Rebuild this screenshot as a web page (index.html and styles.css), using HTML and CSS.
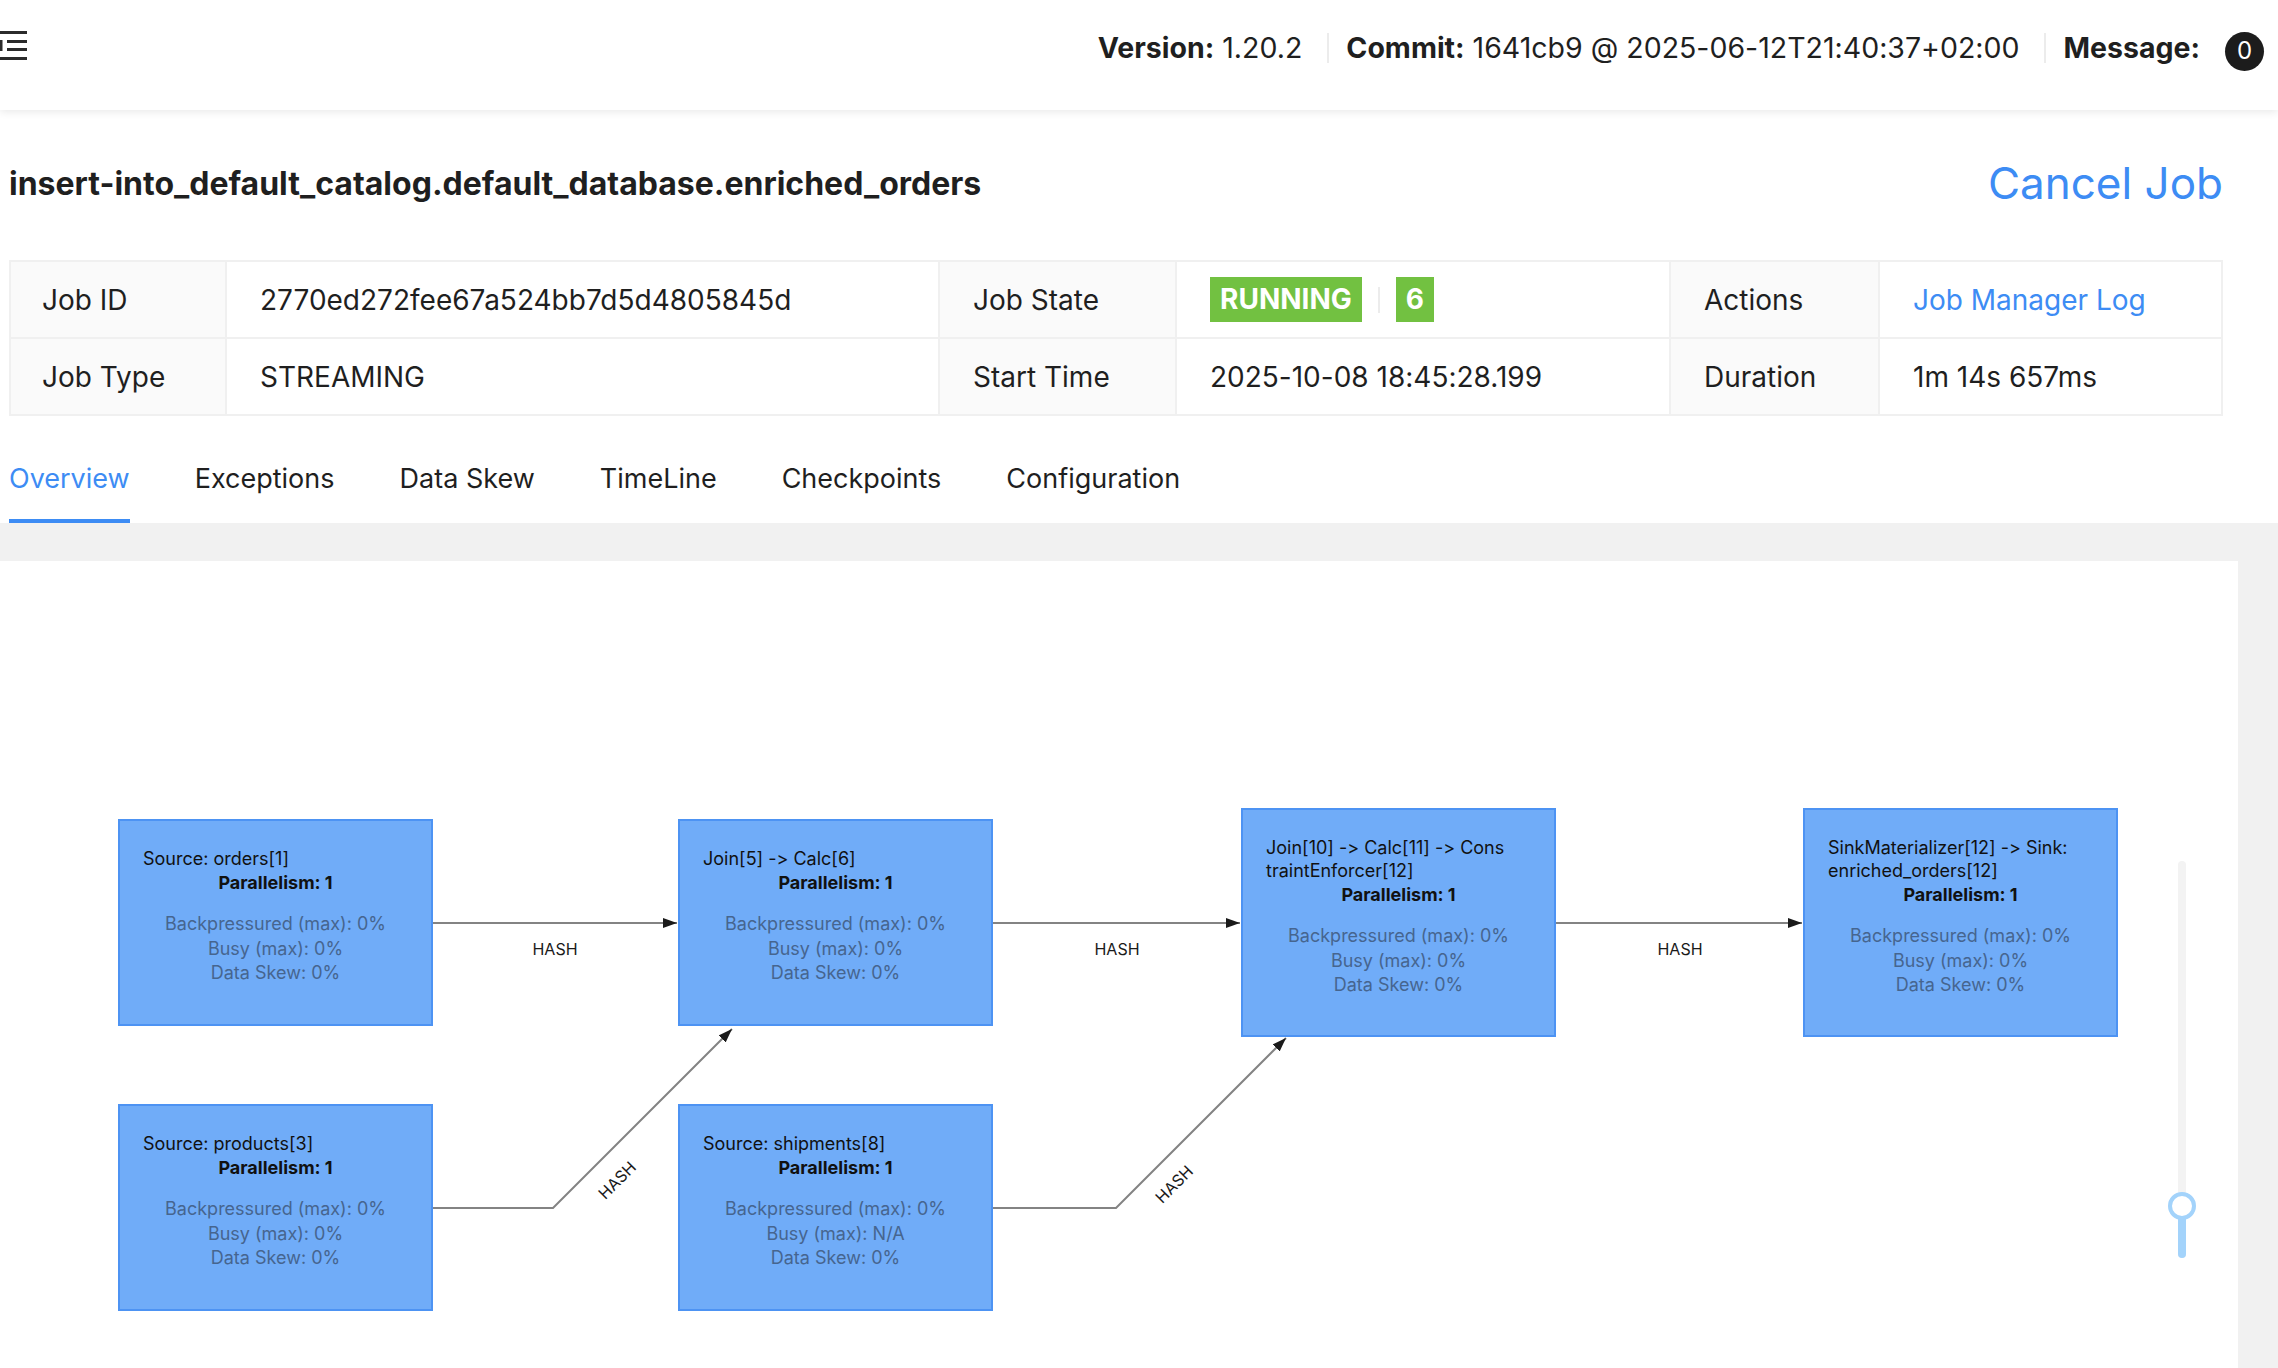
FILE: index.html
```html
<!DOCTYPE html>
<html lang="en">
<head>
<meta charset="utf-8">
<title>Flink Job</title>
<link rel="stylesheet" href="styles.css">
</head>
<body>
<header class="topbar">
  <svg class="menu-icon" width="27" height="29" viewBox="0 0 27 29" aria-hidden="true">
    <rect x="0" y="0" width="27" height="3" fill="#2b2b2b"/>
    <rect x="7" y="9" width="20" height="3" fill="#2b2b2b"/>
    <rect x="7" y="17" width="20" height="3" fill="#2b2b2b"/>
    <rect x="0" y="26" width="27" height="3" fill="#2b2b2b"/>
    <rect x="0" y="9" width="2.5" height="11" fill="#2b2b2b"/>
  </svg>
  <div class="info">
    <span class="info-item"><b>Version:</b> 1.20.2</span>
    <span class="sep"></span>
    <span class="info-item"><b>Commit:</b> 1641cb9 @ 2025-06-12T21:40:37+02:00</span>
    <span class="sep"></span>
    <span class="info-item"><b>Message:</b></span>
    <span class="msg-badge">0</span>
  </div>
</header>

<section class="job-head">
  <div class="title-row">
    <h1 class="title">insert-into_default_catalog.default_database.enriched_orders</h1>
    <a class="cancel">Cancel Job</a>
  </div>
  <div class="desc">
    <div class="cell label first">Job ID</div>
    <div class="cell">2770ed272fee67a524bb7d5d4805845d</div>
    <div class="cell label">Job State</div>
    <div class="cell"><span class="tag">RUNNING</span><span class="tag-sep"></span><span class="tag">6</span></div>
    <div class="cell label">Actions</div>
    <div class="cell"><a class="link">Job Manager Log</a></div>

    <div class="cell label first">Job Type</div>
    <div class="cell">STREAMING</div>
    <div class="cell label">Start Time</div>
    <div class="cell">2025-10-08 18:45:28.199</div>
    <div class="cell label">Duration</div>
    <div class="cell">1m 14s 657ms</div>
  </div>
</section>

<nav class="tabs">
  <span class="tab active">Overview</span>
  <span class="tab">Exceptions</span>
  <span class="tab">Data Skew</span>
  <span class="tab">TimeLine</span>
  <span class="tab">Checkpoints</span>
  <span class="tab">Configuration</span>
</nav>

<main class="workspace">
  <div class="canvas">
    <svg class="edges" width="2238" height="807" viewBox="0 0 2238 807" aria-hidden="true">
      <defs>
        <marker id="arrow" viewBox="0 0 14 10" refX="14" refY="5" markerWidth="14" markerHeight="10" markerUnits="userSpaceOnUse" orient="auto">
          <path d="M0,0 L14,5 L0,10 z" fill="#1a1a1a"/>
        </marker>
      </defs>
      <g class="edge-lines">
        <path d="M433 362 H677" marker-end="url(#arrow)"/>
        <path d="M993 362 H1240" marker-end="url(#arrow)"/>
        <path d="M1556 362 H1802" marker-end="url(#arrow)"/>
        <path d="M433 647 H553 L732 468" marker-end="url(#arrow)"/>
        <path d="M993 647 H1116 L1286 477" marker-end="url(#arrow)"/>
      </g>
      <g class="edge-labels">
        <text x="555" y="394" text-anchor="middle">HASH</text>
        <text x="1117" y="394" text-anchor="middle">HASH</text>
        <text x="1680" y="394" text-anchor="middle">HASH</text>
        <text transform="translate(617 619) rotate(-45)" y="6" text-anchor="middle">HASH</text>
        <text transform="translate(1174 623) rotate(-45)" y="6" text-anchor="middle">HASH</text>
      </g>
    </svg>

    <div class="node" style="left:118px;top:258px">
      <div class="node-title">Source: orders[1]</div>
      <div class="node-par">Parallelism: 1</div>
      <div class="node-metrics">Backpressured (max): 0%<br>Busy (max): 0%<br>Data Skew: 0%</div>
    </div>
    <div class="node" style="left:678px;top:258px">
      <div class="node-title">Join[5] -&gt; Calc[6]</div>
      <div class="node-par">Parallelism: 1</div>
      <div class="node-metrics">Backpressured (max): 0%<br>Busy (max): 0%<br>Data Skew: 0%</div>
    </div>
    <div class="node tall" style="left:1241px;top:247px">
      <div class="node-title">Join[10] -&gt; Calc[11] -&gt; Cons<br>traintEnforcer[12]</div>
      <div class="node-par">Parallelism: 1</div>
      <div class="node-metrics">Backpressured (max): 0%<br>Busy (max): 0%<br>Data Skew: 0%</div>
    </div>
    <div class="node tall" style="left:1803px;top:247px">
      <div class="node-title">SinkMaterializer[12] -&gt; Sink:<br>enriched_orders[12]</div>
      <div class="node-par">Parallelism: 1</div>
      <div class="node-metrics">Backpressured (max): 0%<br>Busy (max): 0%<br>Data Skew: 0%</div>
    </div>
    <div class="node" style="left:118px;top:543px">
      <div class="node-title">Source: products[3]</div>
      <div class="node-par">Parallelism: 1</div>
      <div class="node-metrics">Backpressured (max): 0%<br>Busy (max): 0%<br>Data Skew: 0%</div>
    </div>
    <div class="node" style="left:678px;top:543px">
      <div class="node-title">Source: shipments[8]</div>
      <div class="node-par">Parallelism: 1</div>
      <div class="node-metrics">Backpressured (max): 0%<br>Busy (max): N/A<br>Data Skew: 0%</div>
    </div>

    <div class="zoom-slider">
      <div class="zoom-fill"></div>
      <div class="zoom-handle"></div>
    </div>
  </div>
</main>
</body>
</html>
```

FILE: styles.css
```css
* { box-sizing: border-box; }
html, body { margin: 0; padding: 0; background: #fff; overflow: hidden; }
body {
  width: 2278px;
  height: 1368px;
  font-family: Inter, "Noto Sans", "Liberation Sans", sans-serif;
  font-feature-settings: "calt" 0, "liga" 0;
  font-variant-ligatures: none;
  color: #1f1f1f;
}

/* top bar */
.topbar {
  height: 110px;
  display: flex;
  align-items: center;
  padding: 0 14px 14px 0;
  background: #fff;
  box-shadow: 0 2px 8px rgba(0, 0, 0, 0.09);
  position: relative;
  z-index: 2;
}
.menu-icon { align-self: flex-start; margin-top: 31px; flex: none; }
.info {
  margin-left: auto;
  display: flex;
  align-items: center;
  font-size: 28.5px;
  line-height: 40px;
  color: #1f1f1f;
}
.info b { font-weight: 700; }
.sep { width: 2px; height: 30px; background: #ececec; margin: 0 17px 0 25px; }
.msg-badge {
  margin-left: 25px;
  margin-top: 6px;
  width: 39px;
  height: 39px;
  border-radius: 50%;
  background: #1c1c1c;
  color: #fff;
  font-size: 24px;
  display: flex;
  align-items: center;
  justify-content: center;
}

/* job header */
.job-head { padding: 0 55px 0 9px; }
.title-row {
  height: 146px;
  margin-bottom: 4px;
  display: flex;
  align-items: center;
  justify-content: space-between;
}
.title { margin: 0; font-size: 32px; font-weight: 700; color: #1f1f1f; }
.cancel { font-size: 44px; color: #3d8cf4; cursor: pointer; }

.desc {
  display: grid;
  grid-template-columns: 216px 713px 237px 494px 209px 343px;
  border-top: 2px solid #f0f0f0;
  border-left: 2px solid #f0f0f0;
  font-size: 28px;
}
.cell {
  height: 77px;
  display: flex;
  align-items: center;
  padding: 0 32px 0 33px;
  border-right: 2px solid #f0f0f0;
  border-bottom: 2px solid #f0f0f0;
  white-space: nowrap;
  color: #1f1f1f;
}
.cell.first { padding-left: 31px; }
.cell.label { background: #fafafa; }
.tag {
  height: 45px;
  line-height: 45px;
  padding: 0 10px;
  background: #72c141;
  color: #fff;
  font-weight: 700;
}
.tag-sep { width: 2px; height: 26px; background: #ececec; margin: 0 16px; }
.link { color: #3d8cf4; cursor: pointer; }

/* tabs */
.tabs {
  display: flex;
  gap: 65px;
  padding: 43px 0 0 9px;
  background: #fff;
  font-size: 27px;
  line-height: 40px;
}
.tab { padding-bottom: 20px; border-bottom: 4px solid transparent; color: #1f1f1f; }
.tab.active { color: #3d8cf4; border-bottom-color: #3d8cf4; }

/* graph workspace */
.workspace { background: #f1f1f1; padding: 38px 40px 0 0; }
.canvas { position: relative; height: 807px; background: #fff; overflow: hidden; }
.edges { position: absolute; left: 0; top: 0; }
.edge-lines path { fill: none; stroke: #838383; stroke-width: 2; }
.edge-labels text { font-family: Inter, "Noto Sans", sans-serif; font-size: 16px; fill: #1a1a1a; }

.node {
  position: absolute;
  width: 315px;
  height: 207px;
  padding: 26px 23px 0 23px;
  background: #70acf8;
  border: 2px solid #4d93f3;
  font-size: 18px;
  color: #111;
}
.node.tall { height: 229px; }
.node-title { line-height: 23px; white-space: nowrap; }
.node-par { font-weight: 700; text-align: center; line-height: 26px; }
.node-metrics { margin-top: 16px; line-height: 24.5px; text-align: center; color: #46658f; white-space: nowrap; }

.zoom-slider {
  position: absolute;
  left: 2178px;
  top: 300px;
  width: 8px;
  height: 397px;
  border-radius: 4px;
  background: #f3f3f3;
}
.zoom-fill {
  position: absolute;
  left: 0;
  bottom: 0;
  width: 8px;
  height: 52px;
  border-radius: 4px;
  background: #a3d3fb;
}
.zoom-handle {
  position: absolute;
  left: -10px;
  top: 331px;
  width: 28px;
  height: 28px;
  border-radius: 50%;
  border: 4px solid #a3d3fb;
  background: #fff;
}
```
